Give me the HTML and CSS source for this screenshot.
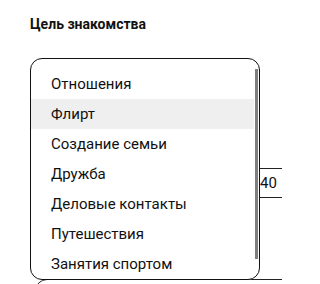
FILE: index.html
```html
<!DOCTYPE html>
<html lang="ru">
<head>
<meta charset="utf-8">
<link rel="stylesheet" href="styles.css">
</head>
<body>
<div class="page">
  <h2 class="title">Цель знакомства</h2>
  <div class="age-row">
    <div class="field"></div>
    <div class="field field-to">40</div>
  </div>
  <div class="select-box"></div>

  <div class="dropdown">
    <div class="viewport">
      <ul class="options">
        <li class="option">Отношения</li>
        <li class="option active">Флирт</li>
        <li class="option">Создание семьи</li>
        <li class="option">Дружба</li>
        <li class="option">Деловые контакты</li>
        <li class="option">Путешествия</li>
        <li class="option">Занятия спортом</li>
      </ul>
    </div>
    <div class="thumb"></div>
  </div>
</div>
</body>
</html>
```

FILE: styles.css
```css
html, body {
  margin: 0;
  padding: 0;
  background: #fff;
}
body {
  width: 282px;
  height: 284px;
  overflow: hidden;
  font-family: "Roboto", "Open Sans", sans-serif;
  color: #111;
}
.page {
  position: relative;
  padding: 15px 0 0 30px;
  height: 284px;
  box-sizing: border-box;
  overflow: hidden;
}
.title {
  margin: 0;
  font-size: 14px;
  font-weight: 700;
  line-height: 18px;
  color: #111;
}
.age-row {
  display: flex;
  gap: 10px;
  margin-top: 135px;
}
.field {
  box-sizing: border-box;
  height: 30px;
  width: 210px;
  border: 1px solid #222;
  padding-left: 8px;
  font-size: 15px;
  line-height: 28px;
  flex-shrink: 0;
}
.field-to {
  width: 100px;
  padding-left: 9px;
}
.select-box {
  margin: 81px 0 0 5px;
  height: 40px;
  width: 300px;
  border: 1px solid #222;
  border-radius: 12px;
}
.dropdown {
  position: absolute;
  left: 30px;
  top: 58px;
  width: 230px;
  height: 222px;
  box-sizing: border-box;
  border: 1px solid #111;
  border-radius: 12px;
  background: #fff;
  overflow: hidden;
}
.viewport {
  height: 213px;
  overflow: hidden;
}
.options {
  list-style: none;
  margin: 0;
  padding: 10px 5px 0 0;
}
.option {
  height: 30px;
  line-height: 30px;
  padding-left: 20px;
  font-size: 15px;
  color: #111;
  white-space: nowrap;
}
.option.active {
  background: #efefef;
}
.thumb {
  position: absolute;
  right: 1px;
  top: 10px;
  width: 3px;
  height: 190px;
  background: #808080;
}
```
